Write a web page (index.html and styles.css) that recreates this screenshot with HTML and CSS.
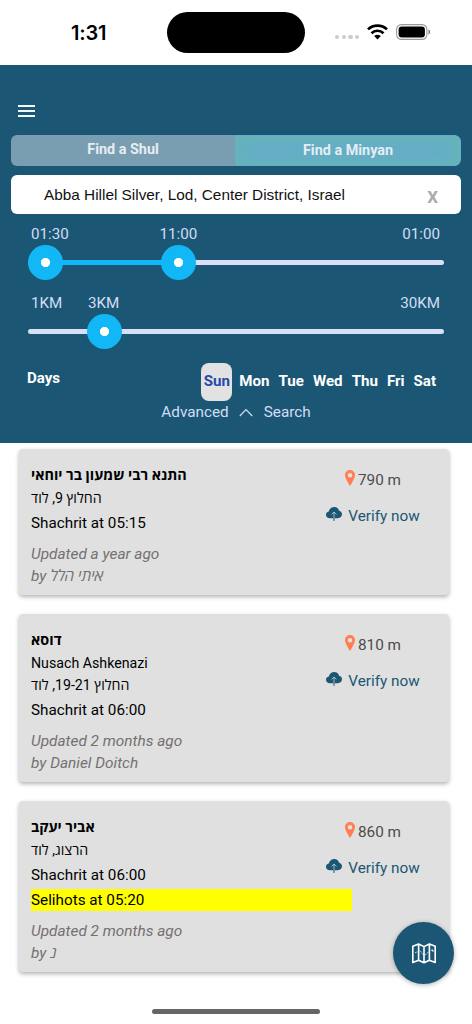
FILE: index.html
```html
<!DOCTYPE html>
<html lang="en">
<head>
  <meta charset="UTF-8" />
  <meta name="viewport" content="width=device-width, initial-scale=1.0"/>
  <title>Find a Minyan</title>
  <link rel="stylesheet" href="styles.css">
</head>
<body>
  <svg class="sprite" width="0" height="0">
    <symbol id="pin" viewBox="0 0 10 16">
      <path fill-rule="evenodd" d="M5 0C2.2 0 0 2.2 0 5c0 3.600 5 11 5 11s5-7.400 5-11C10 2.200 7.800 0 5 0zM5 2.900a2.300 2.300 0 1 1 0 4.600a2.300 2.300 0 0 1 0-4.600z"/>
    </symbol>
    <symbol id="cloud" viewBox="0 0 16 14">
      <path fill="#1b5775" d="M4 11.200C1.600 11.200 0 9.700 0 7.700c0-1.700 1.100-2.900 2.800-3.200C3.300 1.800 5.600 0 8.300 0c2.400 0 4.300 1.500 4.800 3.700C14.900 4 16 5.400 16 7.300c0 2.300-1.600 3.900-4 3.900z"/>
      <path fill="none" stroke="#b5c5cc" stroke-width=".9" d="M8 11.200V5.200M5.600 7.300L8 5l2.400 2.300"/>
      <path fill="none" stroke="#1b5775" d="M8 11v3"/>
    </symbol>
  </svg>

  <div class="status-bar">
    <span class="clock">1:31</span>
    <div class="island"></div>
    <div class="status-icons">
      <div class="signal"><i></i><i></i><i></i><i></i></div>
      <svg class="wifi" width="21" height="16" viewBox="0 0 21 16">
        <g fill="none" stroke="#000" stroke-width="2.700">
          <path d="M1 5.400C6.200.3 14.800.3 20 5.400"/>
          <path d="M4.500 9.200c3.300-3.300 8.700-3.300 12 0"/>
        </g>
        <path d="M7.200 12c1.900-1.700 4.700-1.700 6.600 0l-3.300 3.500z"/>
      </svg>
      <svg width="35" height="16" viewBox="0 0 35 16">
        <rect x=".6" y=".6" width="30.300" height="14.800" rx="4.800" fill="none" stroke="#999" stroke-width="1.100"/>
        <rect x="2.600" y="2.600" width="26.300" height="10.800" rx="3.200"/>
        <path fill="#888" d="M32.400 5.300c2.400.8 2.400 4.600 0 5.400z"/>
      </svg>
    </div>
  </div>

  <header>
    <div class="menu"><i></i><i></i><i></i></div>
    <div class="tabs">
      <div class="tab">Find a Shul</div>
      <div class="tab active">Find a Minyan</div>
    </div>
    <div class="search-box">
      <span>Abba Hillel Silver, Lod, Center District, Israel</span>
      <b>X</b>
    </div>

    <div class="range">
      <div class="labels time-labels"><span>01:30</span><span>11:00</span><span>01:00</span></div>
      <div class="track">
        <div class="fill"></div>
        <div class="thumb thumb-start"></div>
        <div class="thumb thumb-end"></div>
      </div>
    </div>
    <div class="range">
      <div class="labels km-labels"><span>1KM</span><span>3KM</span><span>30KM</span></div>
      <div class="track">
        <div class="thumb thumb-km"></div>
      </div>
    </div>

    <div class="days">
      <span class="days-title">Days</span>
      <span class="day selected">Sun</span>
      <span class="day">Mon</span>
      <span class="day">Tue</span>
      <span class="day">Wed</span>
      <span class="day">Thu</span>
      <span class="day">Fri</span>
      <span class="day">Sat</span>
    </div>
    <div class="advanced">
      <span>Advanced</span>
      <svg width="14" height="9" viewBox="0 0 14 9"><path d="M.8 8L7 1.500 13.200 8" fill="none" stroke="#d2ddf3" stroke-width="1.200"/></svg>
      <span>Search</span>
    </div>
  </header>

  <main>
    <div class="card">
      <div class="info">
        <h3>התנא רבי שמעון בר יוחאי</h3>
        <p class="detail">החלוץ 9, לוד</p>
        <p class="time">Shachrit at 05:15</p>
        <p class="updated">Updated a year ago<br>by איתי הלל</p>
      </div>
      <div class="side">
        <div class="distance"><svg width="10" height="16"><use href="#pin"/></svg>790 m</div>
        <div class="verify"><svg width="16" height="14"><use href="#cloud"/></svg>Verify now</div>
      </div>
    </div>

    <div class="card">
      <div class="info">
        <h3>דוסא</h3>
        <p class="detail">Nusach Ashkenazi</p>
        <p class="detail">החלוץ 19-21, לוד</p>
        <p class="time">Shachrit at 06:00</p>
        <p class="updated">Updated 2 months ago<br>by Daniel Doitch</p>
      </div>
      <div class="side">
        <div class="distance"><svg width="10" height="16"><use href="#pin"/></svg>810 m</div>
        <div class="verify"><svg width="16" height="14"><use href="#cloud"/></svg>Verify now</div>
      </div>
    </div>

    <div class="card">
      <div class="info">
        <h3>אביר יעקב</h3>
        <p class="detail">הרצוג, לוד</p>
        <p class="time">Shachrit at 06:00</p>
        <p class="time selihots">Selihots at 05:20</p>
        <p class="updated">Updated 2 months ago<br>by נ</p>
      </div>
      <div class="side">
        <div class="distance"><svg width="10" height="16"><use href="#pin"/></svg>860 m</div>
        <div class="verify"><svg width="16" height="14"><use href="#cloud"/></svg>Verify now</div>
      </div>
    </div>
  </main>

  <div class="map-btn">
    <svg width="24" height="21" viewBox="0 0 24 21" fill="none" stroke="#fff" stroke-width="1.600" stroke-linejoin="round">
      <path d="M.8 3.200L6.600 1l5.400 2.600L17.400 1l5.800 2.200v16.300l-5.800-2.300-5.400 2.600-5.400-2.600-5.800 2.300zM6.600 1v16.200M12 3.600v16.200M17.400 1v16.200"/>
      <path stroke-width=".7" stroke-dasharray="2 1" d="M3 9.800L8.200 7.600l2.300 3.600 3.500.5 3.500-4"/>
      <path stroke-width=".9" d="M19.500 7h1.500v1.500z"/>
    </svg>
  </div>
  <div class="home-bar"></div>
</body>
</html>
```
FILE: styles.css
```css
* {
  box-sizing: border-box;
}
body {
  margin: 0;
  height: 1024px;
  overflow: hidden;
  position: relative;
  background: #fff;
  font-family: Roboto, "Open Sans", sans-serif;
}
.sprite {
  position: absolute;
}
.status-bar {
  height: 65px;
  display: grid;
  grid-template-columns: 167px 138px 1fr;
  align-items: center;
}
.clock {
  padding-left: 71px;
  font: 600 20px Inter, sans-serif;
  letter-spacing: -0.2px;
}
.island {
  height: 41px;
  border-radius: 21px;
  background: #000;
}
.status-icons {
  display: flex;
  align-items: center;
  padding-left: 30px;
  margin-top: -2px;
}
.signal {
  display: flex;
  gap: 2.500px;
  margin: 11px 8px 0 0;
}
.signal i {
  width: 4.200px;
  height: 4.200px;
  border-radius: 50%;
  background: #ccc;
}
.wifi {
  margin-right: 8px;
}
header {
  height: 378px;
  background: #1b5775;
  padding: 40px 11px 0;
  color: #d2ddf3;
}
.menu {
  width: 17px;
  margin-left: 7px;
  display: flex;
  flex-direction: column;
  gap: 3px;
}
.menu i {
  height: 2px;
  background: #f4f7f9;
}
.tabs {
  display: flex;
  height: 31px;
  margin-top: 18px;
  border-radius: 6px;
  overflow: hidden;
}
.tab {
  flex: 1;
  background: #7a9eb1;
  color: #e5edf2;
  font-weight: bold;
  font-size: 14.400px;
  line-height: 29px;
  text-align: center;
}
.tab.active {
  line-height: 29px;
  border: 1px solid #66acce;
  border-radius: 0 6px 6px 0;
  background: #65acca;
  box-shadow: inset 0 0 18px 2px #66b8b0;
}
.search-box {
  height: 39px;
  margin-top: 9px;
  padding: 0 23px 0 33px;
  border-radius: 6px;
  background: #fff;
  display: flex;
  justify-content: space-between;
  align-items: center;
  font-family: "Liberation Sans", sans-serif;
  font-size: 15.350px;
  color: #111;
}
.search-box b {
  font-family: Roboto, sans-serif;
  font-size: 17px;
  color: #aaa;
  padding-top: 4px;
}
.range {
  height: 69px;
  padding: 10px 17px 0;
}
.labels {
  display: grid;
  padding: 0 4px 0 3px;
  font-size: 15.200px;
  line-height: 20px;
}
.labels span:last-child {
  text-align: right;
}
.time-labels {
  grid-template-columns: 128.500px 1fr 1fr;
}
.km-labels {
  grid-template-columns: 57px 1fr 1fr;
}
.track {
  position: relative;
  height: 5px;
  margin-top: 16px;
  border-radius: 3px;
  background: #d8e0f5;
}
.fill {
  width: 150px;
  height: 5px;
  border-radius: 3px;
  background: #11b8f5;
}
.thumb {
  position: absolute;
  top: -15px;
  width: 35px;
  height: 35px;
  border-radius: 50%;
  background: radial-gradient(circle, #fff 4.200px, #11b8f5 5px);
}
.thumb-start {
  left: 0;
}
.thumb-end {
  left: 132.500px;
}
.thumb-km {
  left: 59px;
}
.days {
  display: flex;
  height: 38px;
  margin-top: 11px;
  padding: 0 25px 0 16px;
  color: #fff;
  font-weight: bold;
  font-size: 15.100px;
  line-height: 36px;
}
.days-title {
  margin-right: auto;
  line-height: 31px;
}
.day {
  margin-left: 9px;
}
.day.selected {
  width: 31px;
  margin-right: -2px;
  border-radius: 8px;
  background: #e2e2e2;
  color: #2449a8;
  text-align: center;
}
.advanced {
  display: flex;
  justify-content: center;
  align-items: center;
  gap: 10.500px;
  height: 22px;
  font-size: 15.300px;
}
main {
  padding: 6px 23px 0 18.500px;
}
.card {
  display: flex;
  justify-content: space-between;
  margin-bottom: 18.700px;
  padding: 16px 0 8.500px 12.500px;
  border-radius: 4px;
  background: #e0e0e0;
  box-shadow: 0 2px 4px rgba(0, 0, 0, 0.3);
  color: #000;
}
.info {
  width: 321px;
}
.card h3,
.card p {
  margin: 0;
  font-size: 14.200px;
  line-height: 22px;
}
.card h3 {
  font-size: 14.400px;
}
.card .time {
  margin-top: 3.200px;
  font-size: 15.250px;
}
.card .updated {
  margin-top: 8.500px;
  color: #757070;
  font-size: 15.400px;
  font-style: italic;
}
.selihots {
  background: #ff0;
}
.side {
  width: 152px;
  margin-left: -55px;
  padding-top: 4px;
  display: flex;
  flex-direction: column;
  align-items: center;
  font-size: 15.300px;
  line-height: 22px;
}
.distance {
  display: flex;
  gap: 3px;
  color: #4c4c4c;
}
.distance svg {
  fill: #ff7f50;
  margin-top: 1px;
}
.verify {
  display: flex;
  gap: 6px;
  margin-top: 14px;
  color: #1b5775;
}
.verify svg {
  margin-top: 2px;
}
.map-btn {
  position: absolute;
  left: 393px;
  top: 922px;
  width: 61px;
  height: 62px;
  border-radius: 50%;
  background: #1b5775;
  box-shadow: 0 1px 5px rgba(0, 0, 0, 0.3);
  display: flex;
  justify-content: center;
  align-items: center;
}
.home-bar {
  position: absolute;
  left: 152px;
  top: 1009px;
  width: 168px;
  height: 5px;
  border-radius: 3px;
  background: #666;
}
```
